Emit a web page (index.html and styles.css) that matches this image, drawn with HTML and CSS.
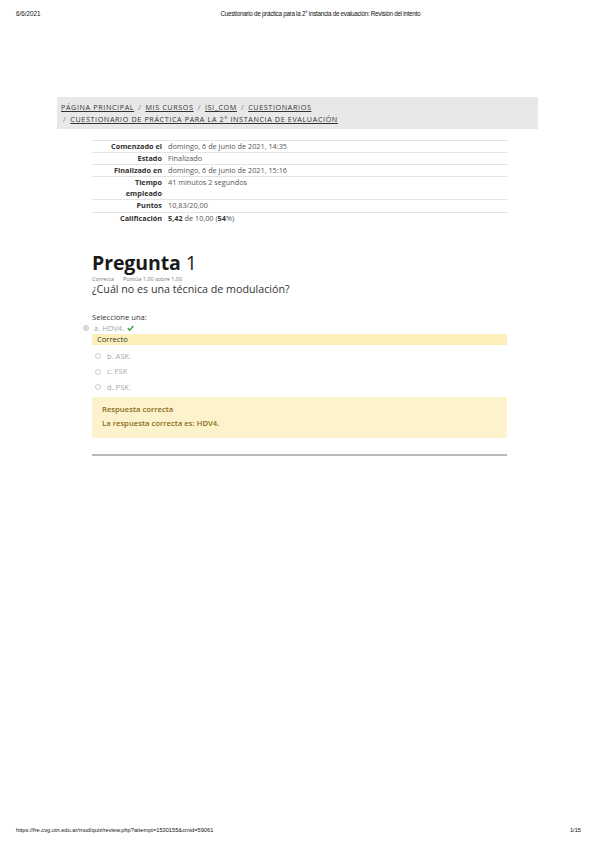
FILE: index.html
```html
<!DOCTYPE html>
<html lang="es">
<head>
<meta charset="utf-8">
<title>Revisión del intento</title>
<link rel="stylesheet" href="styles.css">
</head>
<body>
<div class="page">
  <header class="print-head">
    <span class="date">6/6/2021</span>
    <span class="doc-title">Cuestionario de práctica para la 2° instancia de evaluación: Revisión del intento</span>
  </header>

  <main class="main">
    <nav class="breadcrumb">
      <a href="#">PÁGINA PRINCIPAL</a><span class="sep">/</span><a href="#">MIS CURSOS</a><span class="sep">/</span><a href="#">ISI_COM</a><span class="sep">/</span><a href="#">CUESTIONARIOS</a><br>
      <span class="sep first">/</span><a href="#">CUESTIONARIO DE PRÁCTICA PARA LA 2° INSTANCIA DE EVALUACIÓN</a>
    </nav>

    <div class="content">
      <div class="summary">
        <div class="row"><div class="label">Comenzado el</div><div class="value">domingo, 6 de junio de 2021, 14:35</div></div>
        <div class="row"><div class="label">Estado</div><div class="value">Finalizado</div></div>
        <div class="row"><div class="label">Finalizado en</div><div class="value">domingo, 6 de junio de 2021, 15:16</div></div>
        <div class="row"><div class="label">Tiempo empleado</div><div class="value">41 minutos 2 segundos</div></div>
        <div class="row"><div class="label">Puntos</div><div class="value">10,83/20,00</div></div>
        <div class="row"><div class="label">Calificación</div><div class="value"><b>5,42</b> de 10,00 (<b>54</b>%)</div></div>
      </div>

      <section class="question">
        <h2 class="q-title">Pregunta <span class="qno">1</span></h2>
        <div class="q-info"><span>Correcta</span><span>Puntúa 1,00 sobre 1,00</span></div>
        <p class="q-text">¿Cuál no es una técnica de modulación?</p>

        <p class="prompt">Seleccione una:</p>
        <div class="answer">
          <div class="opt opt-checked"><span class="radio filled"></span><span>a. HDV4.</span>
            <svg class="check" viewBox="0 0 10 8" width="7" height="6"><path d="M1 4.2 L3.8 7 L9 1.2" fill="none" stroke="#3c9a3c" stroke-width="2"/></svg>
          </div>
          <div class="specific">Correcto</div>
          <div class="opt"><span class="radio"></span><span>b. ASK.</span></div>
          <div class="opt"><span class="radio"></span><span>c. FSK</span></div>
          <div class="opt"><span class="radio"></span><span>d. PSK.</span></div>
        </div>

        <div class="outcome">
          <p>Respuesta correcta</p>
          <p>La respuesta correcta es: HDV4.</p>
        </div>
      </section>

      <hr class="divider">
    </div>
  </main>

  <footer class="print-foot">
    <span>https://fre.cvg.utn.edu.ar/mod/quiz/review.php?attempt=1530155&amp;cmid=59061</span>
    <span>1/15</span>
  </footer>
</div>
</body>
</html>
```

FILE: styles.css
```css
* { box-sizing: border-box; }
html, body { margin: 0; padding: 0; background: #fff; }
body { font-family: "Open Sans", "DejaVu Sans", sans-serif; color: #333; }

.page {
  width: 599px;
  min-height: 848px;
  display: flex;
  flex-direction: column;
}

.print-head, .print-foot {
  font-family: "Liberation Sans", Arial, sans-serif;
  color: #111;
  display: flex;
  padding: 0 18px 0 16px;
}
.print-head { padding-top: 10px; line-height: 7px; font-size: 6.3px; }
.print-head .doc-title { margin-left: 180px; letter-spacing: -0.28px; }
.print-foot { margin-top: auto; justify-content: space-between; padding-bottom: 14px; line-height: 7px; font-size: 5.7px; }

.main { padding: 0 61px 0 57px; margin-top: 80px; }

.breadcrumb {
  background: #e8e8e8;
  padding: 4px;
  font-size: 7.2px;
  line-height: 12px;
  letter-spacing: 0.62px;
}
.breadcrumb a { color: #333; text-decoration: underline; }
.breadcrumb .sep { color: #777; margin: 0 4px; }
.breadcrumb .sep.first { margin-left: 2px; }

.content { padding: 0 31px 0 35px; }

.summary { margin-top: 11px; font-size: 7.3px; color: #555; }
.row {
  display: grid;
  grid-template-columns: 76px 1fr;
  border-top: 1px solid #e3e3e3;
  line-height: 11.1px;
}
.row .label {
  text-align: right;
  font-weight: 700;
  color: #333;
  padding: 0 6px 0 12px;
}
.row .value b { font-weight: 700; color: #333; }

.question { margin-top: 28px; }
.q-title {
  margin: 0;
  font-size: 19.5px;
  line-height: 22px;
  font-weight: 700;
  color: #1a1a1a;
  letter-spacing: -0.1px;
}
.q-title .qno { font-weight: 400; }
.q-info { font-size: 5.5px; color: #777; line-height: 8px; margin-top: 1px; }
.q-info span + span { margin-left: 9px; }
.q-text { margin: 0; font-size: 10.7px; line-height: 13px; color: #333; }

.prompt { margin: 17px 0 0; font-size: 7.6px; line-height: 9px; color: #333; }

.answer { font-size: 7.6px; color: #a6a6a6; }
.opt { display: flex; align-items: center; line-height: 15.5px; padding-left: 3px; }
.opt .radio {
  width: 6px; height: 6px;
  border: 0.7px solid #ccc;
  border-radius: 50%;
  margin-right: 6px;
}
.opt-checked { margin-left: -9px; line-height: 12px; padding-left: 0; }
.opt-checked .radio { margin-right: 5px; }
.radio.filled { background: #ddd; border-color: #ccc; }
.check { margin-left: 3px; }
.specific {
  background: #fcefba;
  color: #333;
  line-height: 11px;
  padding-left: 5px;
  margin-bottom: 4px;
}

.outcome {
  margin-top: 2px;
  background: #fcf2cc;
  color: #8a6d1b;
  font-size: 7.7px;
  font-weight: 600;
  padding: 5px 10px 8px;
}
.outcome p { margin: 0; line-height: 14px; }

.divider {
  border: 0;
  height: 2px;
  background: #b9b9b9;
  margin: 16px 0 0;
}
```
